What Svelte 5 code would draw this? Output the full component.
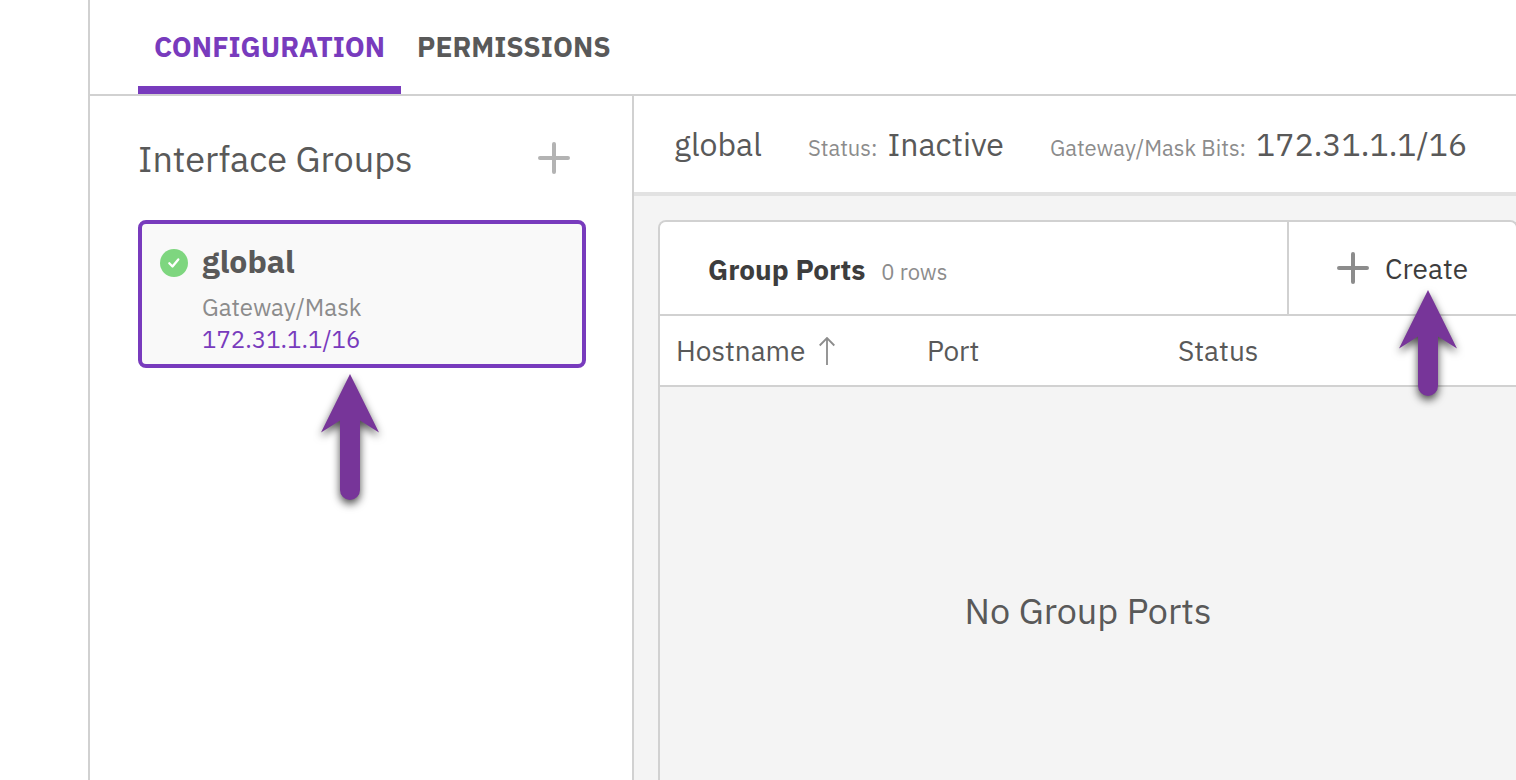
<script>
  const tabs = [
    { label: 'CONFIGURATION', active: true },
    { label: 'PERMISSIONS', active: false }
  ];
  const groups = [{ name: 'global', gateway: '172.31.1.1/16' }];
  const selected = groups[0];
</script>

{#snippet plus()}
  <svg class="plus" viewBox="0 0 32 32" aria-hidden="true">
    <path d="M16 2v28M2 16h28" />
  </svg>
{/snippet}

{#snippet pointer(end)}
  <svg class="pointer" viewBox="0 0 80 150" aria-hidden="true">
    <path d="M40 9 L69 67.500 L50 55.500 V{end} A10 10 0 0 1 30 {end} V55.500 L11 67.500 Z" />
  </svg>
{/snippet}

<div class="page">
  <nav class="tabs">
    {#each tabs as tab}
      <button class="tab" class:active={tab.active}>{tab.label}</button>
    {/each}
  </nav>

  <div class="content">
    <aside class="sidebar">
      <header class="sidebar-head">
        <h1>Interface Groups</h1>
        <button class="add" aria-label="Add interface group">{@render plus()}</button>
      </header>
      {#each groups as group}
        <div class="group-wrap">
          <button class="group">
            <svg class="check" viewBox="0 0 28 28" aria-hidden="true">
              <circle cx="14" cy="14" r="14" />
              <path d="M9.300 14.300l3.200 3.200 5.800-7" />
            </svg>
            <span class="group-text">
              <strong>{group.name}</strong>
              <span class="muted">Gateway/Mask</span>
              <span class="address">{group.gateway}</span>
            </span>
          </button>
          {@render pointer(125)}
        </div>
      {/each}
    </aside>

    <main class="detail">
      <header class="summary">
        <h2>{selected.name}</h2>
        <div class="fact"><span>Status:</span> <b>Inactive</b></div>
        <div class="fact"><span>Gateway/Mask Bits:</span> <b>{selected.gateway}</b></div>
      </header>

      <section class="panel">
        <div class="panel-head">
          <div class="panel-title">
            <h3>Group Ports</h3>
            <span class="count">0 rows</span>
          </div>
          <button class="create">
            {@render plus()}
            <span class="create-label">Create{@render pointer(105)}</span>
          </button>
        </div>
        <table>
          <thead>
            <tr>
              <th>
                <span class="sort">
                  Hostname
                  <svg viewBox="0 0 16 28" aria-hidden="true"><path d="M8 28V1M0.700 8.500L8 1l7.300 7.500" /></svg>
                </span>
              </th>
              <th>Port</th>
              <th>Status</th>
              <th class="rest"></th>
            </tr>
          </thead>
          <tbody>
            <tr><td colspan="4">No Group Ports</td></tr>
          </tbody>
        </table>
      </section>
    </main>
  </div>
</div>

<style>
  .page {
    box-sizing: border-box;
    min-height: 100vh;
    margin-left: 88px;
    border-left: 2px solid #d1d1d1;
    display: flex;
    flex-direction: column;
    overflow: hidden;
    background: #fff;
    color: #595959;
    font-family: "IBM Plex Sans", "Noto Sans", sans-serif;
    font-size: 28px;
  }
  :global(body) { background: #fff; }
  h1, h2, h3 { margin: 0; font-weight: 400; }
  button {
    margin: 0;
    padding: 0;
    border: 0;
    background: none;
    color: inherit;
    font: inherit;
    text-align: left;
    cursor: pointer;
  }
  .tabs {
    display: flex;
    padding-left: 48px;
    border-bottom: 2px solid #d1d1d1;
  }
  .tab {
    height: 94px;
    padding: 6px 16px 0;
    border-bottom: 8px solid transparent;
    font-weight: 700;
  }
  .tab.active { color: #783bbd; border-color: #783bbd; }
  .content { flex: 1; display: flex; }
  .sidebar {
    box-sizing: border-box;
    flex: 0 0 544px;
    padding: 34px 46px 0 48px;
    border-right: 2px solid #d1d1d1;
  }
  .sidebar-head {
    height: 56px;
    margin-bottom: 34px;
    padding-right: 16px;
    display: flex;
    align-items: center;
    justify-content: space-between;
  }
  h1 { font-size: 36px; }
  .plus {
    display: block;
    flex: none;
    width: 32px;
    height: 32px;
    fill: none;
    stroke: #8c8c8c;
    stroke-width: 4;
    stroke-linecap: round;
  }
  .add .plus { stroke: #b3b3b3; }
  .group-wrap { position: relative; }
  .group {
    box-sizing: border-box;
    width: 100%;
    height: 148px;
    padding: 16px 18px 0;
    display: flex;
    align-items: flex-start;
    gap: 14px;
    border: 4px solid #783bbd;
    border-radius: 8px;
    background: #f9f9f9;
  }
  .check { width: 28px; height: 28px; margin-top: 9px; flex: none; }
  .check circle { fill: #7ed67f; }
  .check path {
    fill: none;
    stroke: #fff;
    stroke-width: 2.3;
    stroke-linecap: round;
    stroke-linejoin: round;
  }
  .group-text { display: flex; flex-direction: column; font-size: 24px; line-height: 32px; }
  .group-text strong { font-size: 32px; line-height: 43px; margin-bottom: 8px; }
  .muted { color: #8c8c8c; }
  .address { color: #783bbd; }
  .pointer {
    position: absolute;
    width: 80px;
    height: 150px;
    pointer-events: none;
    fill: #773599;
    filter: drop-shadow(0 4px 4px rgba(0, 0, 0, 0.7));
  }
  .group-wrap .pointer { top: 145px; left: 172px; }
  .detail {
    flex: 1;
    min-width: 0;
    display: flex;
    flex-direction: column;
    background: #f4f4f4;
  }
  .summary {
    height: 96px;
    padding-left: 40px;
    display: flex;
    align-items: baseline;
    gap: 46px;
    line-height: 96px;
    border-bottom: 4px solid #e2e2e2;
    background: #fff;
    white-space: nowrap;
  }
  h2, .fact b { font-size: 32px; font-weight: 400; }
  .fact { display: flex; align-items: baseline; gap: 10px; }
  .fact span, .count { color: #8c8c8c; font-size: 22px; }
  .panel {
    flex: 1;
    margin: 24px -2px 0 24px;
    border: 2px solid #d1d1d1;
    border-bottom: 0;
    border-radius: 8px 8px 0 0;
  }
  .panel-head {
    height: 92px;
    padding-left: 48px;
    display: flex;
    justify-content: space-between;
    border-radius: 6px 6px 0 0;
    background: #fff;
  }
  .panel-title {
    display: flex;
    align-items: baseline;
    gap: 16px;
    line-height: 96px;
  }
  h3 { color: #3d3d3d; font-size: 28px; font-weight: 700; }
  .create {
    padding: 0 48px;
    display: flex;
    align-items: center;
    gap: 16px;
    border-left: 2px solid #d1d1d1;
    color: #3d3d3d;
  }
  .create-label { position: relative; }
  .create-label .pointer { top: 31px; left: calc(50% - 39px); }
  table { width: 100%; border-collapse: collapse; table-layout: fixed; }
  th {
    height: 69px;
    box-sizing: content-box;
    padding: 0 0 0 16px;
    border: solid #d1d1d1;
    border-width: 2px 0;
    background: #fff;
    font-weight: 400;
    text-align: left;
  }
  th:not(.rest) { width: 235px; }
  th.rest { width: auto; padding: 0; }
  .sort { display: flex; align-items: center; gap: 14px; }
  .sort svg { width: 16px; height: 28px; fill: none; stroke: #8c8c8c; stroke-width: 1.8; }
  td { padding: 200px 0 0; font-size: 36px; line-height: 48px; text-align: center; }
</style>
